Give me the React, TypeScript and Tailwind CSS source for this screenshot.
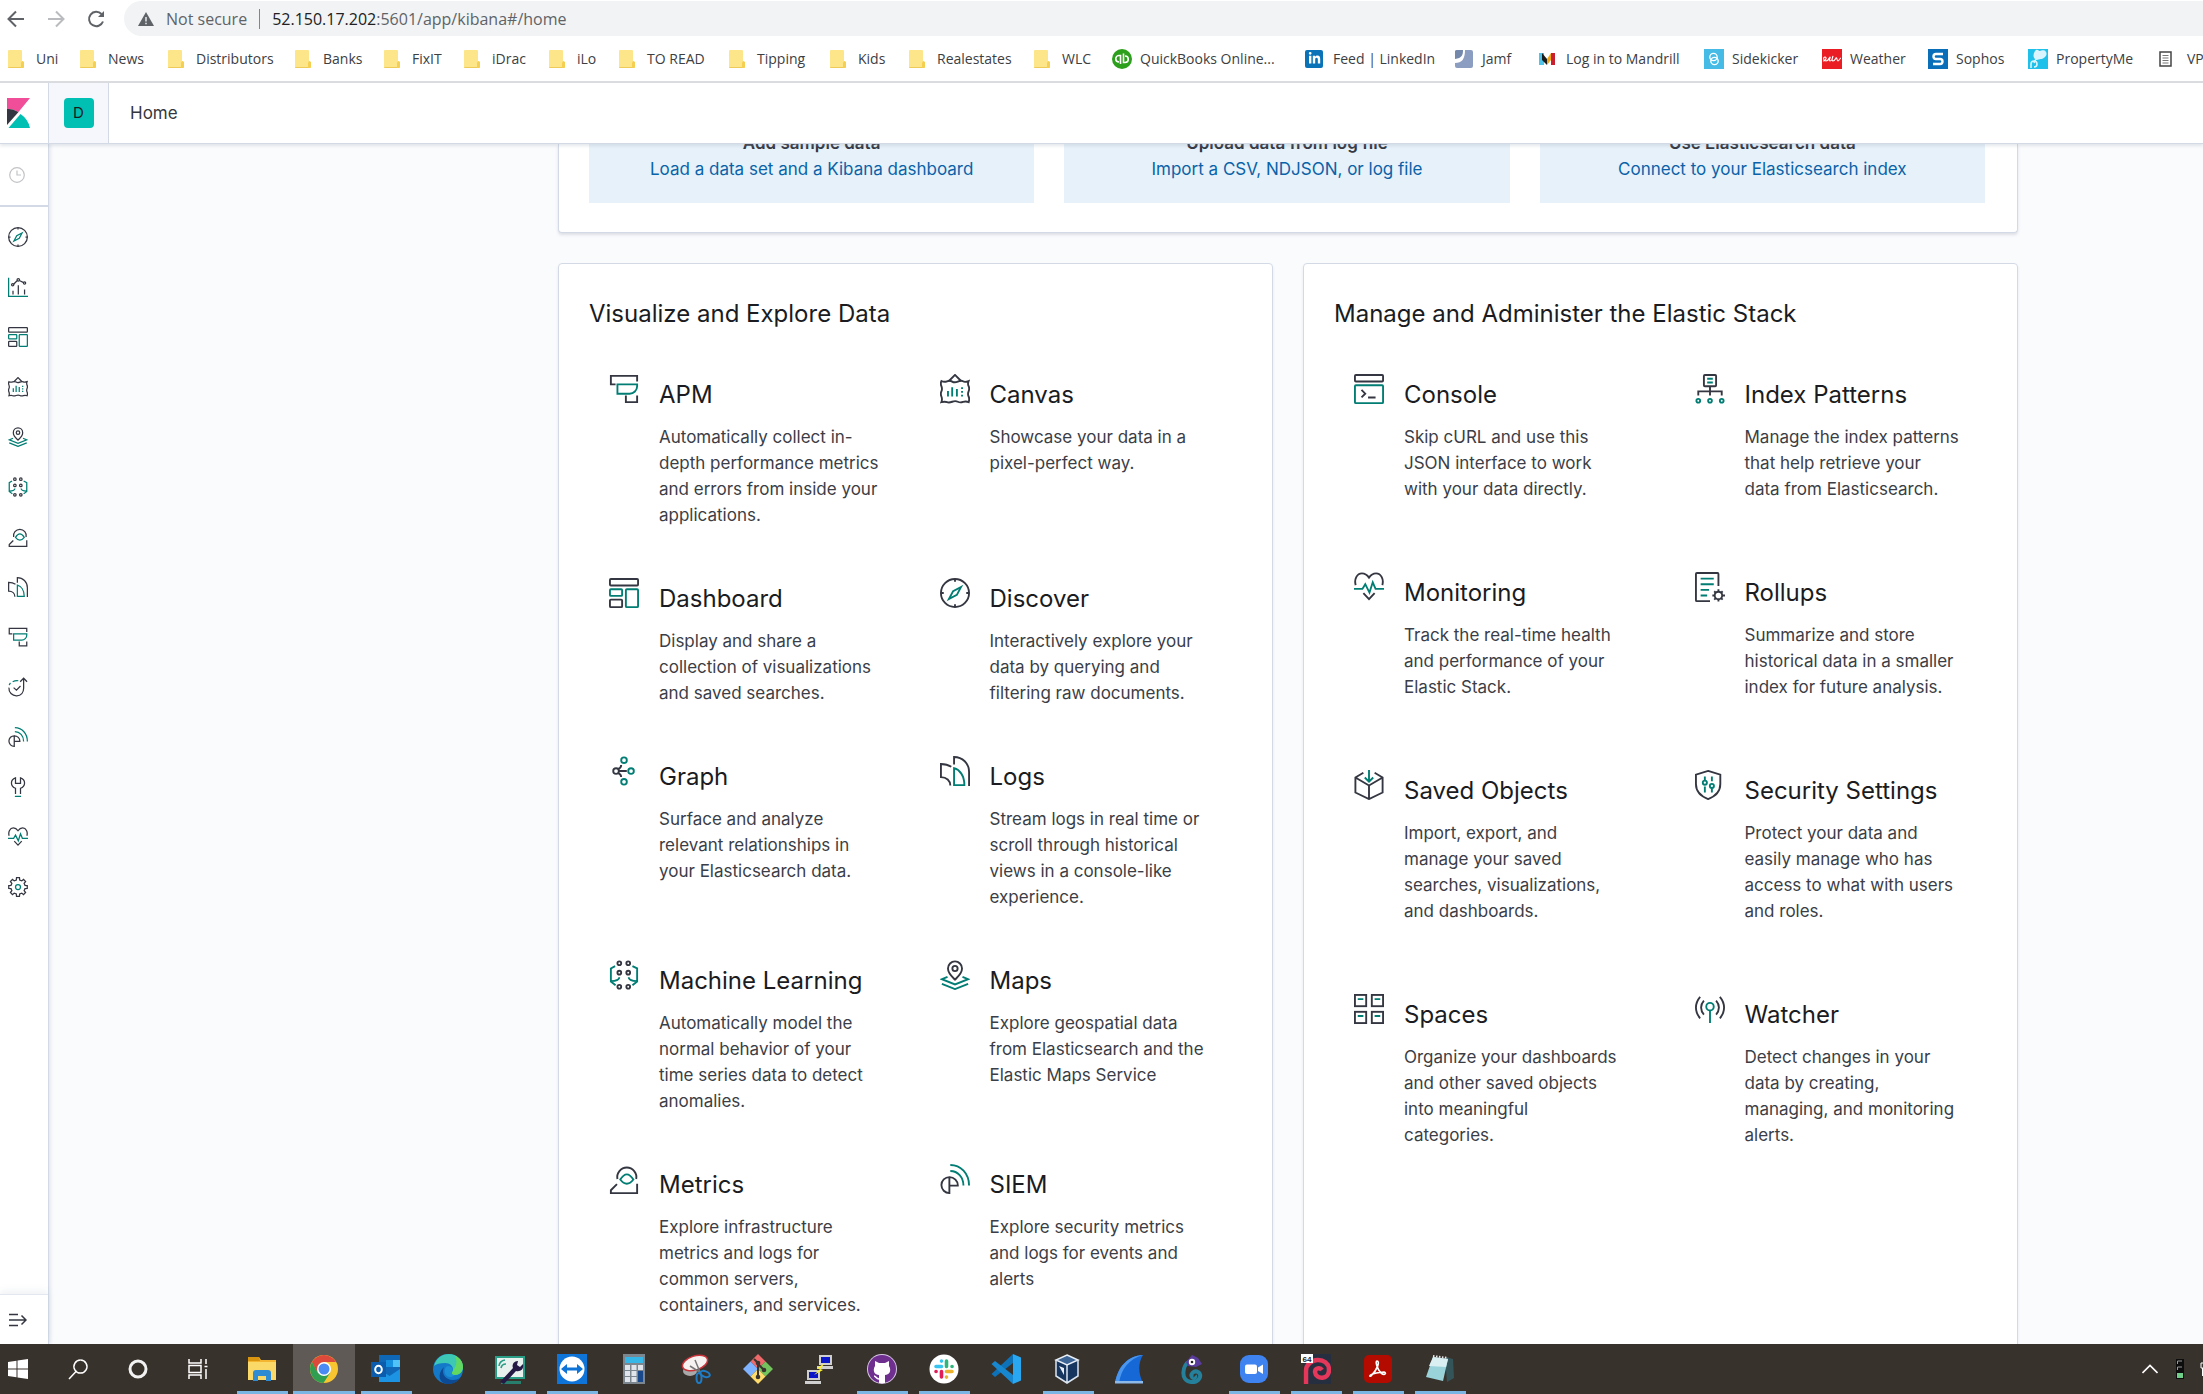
import type { ReactNode } from 'react';
import { FaLinkedinIn } from 'react-icons/fa';

const DARK = '#343741';
const TEAL = '#017D73';

function gearPath(cx: number, cy: number, outer: number, inner: number, teeth: number) {
  const points: string[] = [];
  const step = (Math.PI * 2) / teeth;
  for (let i = 0; i < teeth; i++) {
    const a = i * step;
    const corners: [number, number][] = [
      [inner, a - step * 0.3],
      [outer, a - step * 0.2],
      [outer, a + step * 0.2],
      [inner, a + step * 0.3],
    ];
    corners.forEach(([r, t]) => points.push(`${(cx + r * Math.sin(t)).toFixed(2)} ${(cy - r * Math.cos(t)).toFixed(2)}`));
  }
  return `M${points.join('L')}Z`;
}

type Shape = { dark: ReactNode; teal?: ReactNode };

const SHAPES: Record<string, Shape> = {
  apm: {
    dark: <path d="M7 11H2V2h28v6M18 23v7h12v-7" />,
    teal: <path d="M9 11h21v2a8 8 0 0 1-8 8H9z" />,
  },
  canvas: {
    dark: (
      <>
        <path d="M9.500 7.500L16 1l6.500 6.500" />
        <path d="M1.500 7.500q3 1.500 6 .3t5.500.3 6 0 5.500-.3 6-.3q-1.200 3 0 5.500t0 5.500 0 5.500.1 6q-3-1.300-6-.2t-5.600-.2-6 0-5.500.4-6 0q1.200-3 0-6t0-5.500 0-5.500 0-5.500z" />
      </>
    ),
    teal: <path d="M8.500 18v6M13 14v10M18 16v8M23.500 14v2M23.500 18v2M23.500 22v2" />,
  },
  dashboard: {
    dark: (
      <>
        <rect x="1" y="1" width="30" height="7" rx="1" />
        <rect x="1" y="23" width="13" height="8" rx="1" />
      </>
    ),
    teal: (
      <>
        <rect x="1" y="12" width="13" height="7" rx="1" />
        <rect x="18" y="12" width="13" height="19" rx="1" />
      </>
    ),
  },
  discover: {
    dark: (
      <>
        <circle cx="16" cy="16" r="15" />
        <path d="M16 1v3M16 28v3M1 16h3M28 16h3" />
      </>
    ),
    teal: <path d="M22.500 9.500l-4.500 8.500-8.500 4.500 4.500-8.500z" />,
  },
  graph: {
    dark: (
      <>
        <circle cx="7.500" cy="16" r="3" />
        <path d="M10.500 16H19M13 9.500c0 2-1 3.500-3.500 4.500M13 22.500c0-2-1-3.500-3.500-4.500" />
      </>
    ),
    teal: (
      <>
        <circle cx="16" cy="4.500" r="3" />
        <circle cx="23.500" cy="16" r="3" />
        <circle cx="16" cy="27.500" r="3" />
      </>
    ),
  },
  logs: {
    dark: <path d="M12 11.500C9 9.500 6 8.500 1 8.500v14c6 0 10 4 10 9M15 9V1c9 0 16 7 16 16v15" />,
    teal: <path d="M15 13c6 1.500 11 8 11 18H15z" />,
  },
  ml: {
    dark: (
      <>
        <circle cx="11" cy="3.500" r="2" />
        <circle cx="20.500" cy="3.500" r="2" />
        <circle cx="11" cy="13.500" r="2" />
        <circle cx="20.500" cy="13.500" r="2" />
        <circle cx="11" cy="28.500" r="2" />
        <circle cx="20.500" cy="28.500" r="2" />
      </>
    ),
    teal: <path d="M6.500 6.500L2 9v14l5 4M2 22.500c4 0 9-.5 9-4M25 6.500L30 9v14l-5 4M30 22.500c-4 0-9-.5-9-4" />,
  },
  maps: {
    dark: (
      <>
        <path d="M16 21c-4-4-7.500-7-7.500-12a7.500 7.500 0 0 1 15 0c0 5-3.500 8-7.500 12z" />
        <circle cx="16" cy="9" r="2.800" />
      </>
    ),
    teal: <path d="M8 18l-6 2.500 14 5.500 14-5.500-6-2.500M2 25.500l14 5.500 14-5.500" />,
  },
  metrics: {
    dark: <path d="M9 16a10.200 10.200 0 1 1 20 0M8.500 21.500L2 28v3h28V21" />,
    teal: <path d="M12 16.500q3.500-5.500 7-5.500t7 5.500q-3.500 4.500-7 4.500t-7-4.500z" />,
  },
  siem: {
    dark: <path d="M10 14a8.500 8.500 0 0 0 0 17zM10 14a9 8.700 0 0 1 9 9h-9" />,
    teal: <path d="M11 1c11 0 20 9 20 22M11 7.500c8 0 14 6.500 14 15.500" />,
  },
  console: {
    dark: (
      <>
        <rect x="1" y="1" width="30" height="7" rx="1" />
        <path d="M8 17l4 4-4 4M15 25h8" />
      </>
    ),
    teal: <rect x="1" y="12" width="30" height="19" rx="1" />,
  },
  indexPatterns: {
    dark: (
      <>
        <rect x="9.500" y="1" width="13" height="12" rx="1" />
        <path d="M16 13v10M3.500 23v-4.500h25V23" />
      </>
    ),
    teal: (
      <>
        <path d="M13 5h6M13 9h6" />
        <circle cx="3.500" cy="28.500" r="2" />
        <circle cx="16" cy="28.500" r="2" />
        <circle cx="28.500" cy="28.500" r="2" />
      </>
    ),
  },
  monitoring: {
    dark: <path d="M1.800 14C0 8 3 1.500 8.500 1.500c3.500 0 5.800 2 7.500 4.500 1.700-2.500 4-4.500 7.500-4.500C29 1.500 32 8 30.200 14M10 22.500l6 6.500 6-6.500" />,
    teal: <path d="M0 18h9l3-5 4.500 9L20 11l3 7h9" />,
  },
  rollups: {
    dark: (
      <>
        <path d="M16 31H2a1 1 0 0 1-1-1V2a1 1 0 0 1 1-1h22a1 1 0 0 1 1 1v13" />
        <circle cx="25" cy="25" r="4" />
        <path d="M25 18.500V21M25 29v2.500M18.500 25H21M29 25h3M20.500 20.500l1.700 1.700M27.800 27.800l1.700 1.700M29.500 20.500l-1.700 1.700M22.200 27.800l-1.700 1.700" />
      </>
    ),
    teal: <path d="M6 7h14M6 13h14M6 19h9M6 25h7" />,
  },
  saved: {
    dark: <path d="M10 3L1.500 8v16L16 31l14.500-7V8L22 3M1.500 8L16 16.500 30.500 8M16 16.500V31" />,
    teal: <path d="M16 0v12M11.500 8l4.500 4.500L20.500 8" />,
  },
  security: {
    dark: <path d="M14 1l13 4v10c0 7-5 13-13 16C6 28 1 22 1 15V5z" />,
    teal: (
      <>
        <path d="M10.500 7v4M10.500 17.500V24M18 7v5M18 19.500V24" />
        <circle cx="10.500" cy="13.500" r="2.200" />
        <circle cx="18" cy="17" r="2.200" />
      </>
    ),
  },
  spaces: {
    dark: (
      <>
        <rect x="1" y="1" width="12" height="12" />
        <rect x="19" y="1" width="12" height="12" />
        <rect x="1" y="19" width="12" height="12" />
        <rect x="19" y="19" width="12" height="12" />
      </>
    ),
    teal: <path d="M4 5.500h6M22 5.500h6M4 23.500h6M22 23.500h6" />,
  },
  watcher: {
    dark: <path d="M5.500 3c-6 7-6 16 0 23M26.500 3c6 7 6 16 0 23M9.500 7c-4 4.500-4 10.500 0 15M22.500 7c4 4.500 4 10.500 0 15" />,
    teal: (
      <>
        <circle cx="16" cy="13.500" r="4" />
        <path d="M16 17.500V31" />
      </>
    ),
  },
  visualize: {
    dark: (
      <>
        <path d="M8 22v6M16.500 13v15M26.500 20v8M9 11.500l5.500-5.500M19 6l6 3" />
        <circle cx="7.500" cy="12.500" r="1.800" />
        <circle cx="16.500" cy="4.500" r="2" />
        <circle cx="26.500" cy="9.500" r="1.800" />
      </>
    ),
    teal: <path d="M1 1v30h31" />,
  },
  uptime: {
    dark: <path d="M1.500 17a12 12 0 0 0 12.500 13c7 0 11-5 11-12V3M19.500 7.500L25 2l5.500 5.500M9 17l4.500 4 6.500-6.500" />,
    teal: <path d="M2 13c.5-1.500 1-2.500 2-3.500M7.500 7.500c3-1.500 6-2 9-1.500" />,
  },
  devtools: {
    dark: <path d="M12 27v-9c-4-1.500-6.500-4.500-6.500-8.500S8 3 12 1.500V10h8V1.500c4 1.500 6.500 4 6.500 8S24 16.500 20 18v9" />,
    teal: <path d="M11 31h10" />,
  },
  management: {
    dark: <path d={gearPath(16, 16, 15, 11.500, 8)} />,
    teal: <circle cx="16" cy="16" r="4" />,
  },
};

function AppIcon({ name, className }: { name: string; className: string }) {
  const { dark, teal } = SHAPES[name];
  return (
    <svg viewBox="0 0 32 32" className={className} fill="none" strokeWidth="2" aria-hidden="true">
      <g stroke={DARK}>{dark}</g>
      <g stroke={TEAL}>{teal}</g>
    </svg>
  );
}

/* ---------- Browser ---------- */

function Folder() {
  return (
    <svg viewBox="0 0 20 20" className="size-5">
      <path d="M0 2a1 1 0 0 1 1-1h12a1 1 0 0 1 1 1v10l2 1v5a1 1 0 0 1-1 1H1a1 1 0 0 1-1-1z" fill="#fde68a" />
      <path d="M14 12l2 1v5a1 1 0 0 1-1 1h-2v-5z" fill="#f5cf52" />
      <path d="M0 18h13v1H1a1 1 0 0 1-1-1z" fill="#eecb58" />
    </svg>
  );
}

const favicons: Record<string, ReactNode> = {
  qb: (
    <svg viewBox="0 0 20 20" className="size-5">
      <circle cx="10" cy="10" r="10" fill="#2ca01c" />
      <g fill="none" stroke="#fff" strokeWidth="1.600">
        <path d="M8.500 13.500V6.500H7a3 3 0 0 0 0 6.500M11.500 6v7.500H13a3 3 0 0 0 0-6.500M8.500 6v9M11.500 4.500V13" />
      </g>
    </svg>
  ),
  linkedin: (
    <span className="flex size-[18px] items-center justify-center rounded-xs bg-[#0a73b7] text-white">
      <FaLinkedinIn size={13} />
    </span>
  ),
  jamf: (
    <svg viewBox="0 0 20 20" className="size-5">
      <path d="M1 2a2 2 0 0 1 2-1h6c0 5-1 8-8 9z" fill="#7488ab" />
      <path d="M11 1h6a2 2 0 0 1 2 2v14a2 2 0 0 1-2 2H3a2 2 0 0 1-2-2v-3c7 0 10-4 10-13z" fill="#8b9dc0" />
    </svg>
  ),
  mandrill: (
    <svg viewBox="0 0 20 20" className="size-5">
      <path d="M1 4h5v12H1z" fill="#4fc3e8" />
      <path d="M4 4l5 6v6l-5-5z" fill="#1b1b1b" />
      <path d="M9 10l4-6v7l-4 5z" fill="#f0a818" />
      <path d="M13 4h4v12h-4z" fill="#c8202f" />
    </svg>
  ),
  sidekicker: (
    <svg viewBox="0 0 20 20" className="size-5">
      <path d="M0 0h20v20H0z" fill="#45bbe6" />
      <g fill="none" stroke="#fff" strokeWidth="1.300">
        <circle cx="9.500" cy="8" r="3.700" />
        <circle cx="10.500" cy="12" r="3.700" />
      </g>
    </svg>
  ),
  weather: (
    <svg viewBox="0 0 20 20" className="size-5">
      <path d="M0 0h20v20H0z" fill="#ea1c24" />
      <path d="M1 12c3 0 4-4 2-4s-2 4 1 4 3-4 4-4-2 4 0 4 3-5 3-5-2 5 0 5 2-2 3-3 1 3 2 3 2-3 3-3" fill="none" stroke="#fff" strokeWidth="1.100" />
    </svg>
  ),
  sophos: (
    <svg viewBox="0 0 20 20" className="size-5">
      <path d="M0 0h20v20H0z" fill="#0a6fb8" />
      <path d="M15 5H8a2.500 2.500 0 0 0 0 5h4a2.500 2.500 0 0 1 0 5H5" fill="none" stroke="#fff" strokeWidth="2.400" />
    </svg>
  ),
  property: (
    <svg viewBox="0 0 20 20" className="size-5">
      <path d="M0 0h20v20H0z" fill="#1fc0ea" />
      <path d="M7 2c2-3 4 0 5 0s4-2 6 1-2 7-5 7-4 2-6 0-2-5 0-8z" fill="#d9f4fc" />
      <path d="M3 19v-4a3 3 0 1 1 3 3M8 10l-2 4" fill="none" stroke="#d9f4fc" strokeWidth="1.600" />
    </svg>
  ),
  doc: (
    <svg viewBox="0 0 20 20" className="size-5">
      <path d="M1 3h11v14H1z" fill="#fff" stroke="#444" strokeWidth="1.500" />
      <path d="M3.500 6.500h6M3.500 9h6M3.500 11.500h6M3.500 14h6" stroke="#777" />
    </svg>
  ),
};

const bookmarks: { label: string; icon?: string; width: string }[] = [
  { label: 'Uni', width: 'w-[72px]' },
  { label: 'News', width: 'w-[88px]' },
  { label: 'Distributors', width: 'w-[127px]' },
  { label: 'Banks', width: 'w-[89px]' },
  { label: 'FixIT', width: 'w-[80px]' },
  { label: 'iDrac', width: 'w-[85px]' },
  { label: 'iLo', width: 'w-[70px]' },
  { label: 'TO READ', width: 'w-[110px]' },
  { label: 'Tipping', width: 'w-[101px]' },
  { label: 'Kids', width: 'w-[79px]' },
  { label: 'Realestates', width: 'w-[125px]' },
  { label: 'WLC', width: 'w-[78px]' },
  { label: 'QuickBooks Online...', icon: 'qb', width: 'w-[193px]' },
  { label: 'Feed | LinkedIn', icon: 'linkedin', width: 'w-[149px]' },
  { label: 'Jamf', icon: 'jamf', width: 'w-[84px]' },
  { label: 'Log in to Mandrill', icon: 'mandrill', width: 'w-[166px]' },
  { label: 'Sidekicker', icon: 'sidekicker', width: 'w-[118px]' },
  { label: 'Weather', icon: 'weather', width: 'w-[106px]' },
  { label: 'Sophos', icon: 'sophos', width: 'w-[100px]' },
  { label: 'PropertyMe', icon: 'property', width: 'w-[131px]' },
  { label: 'VP', icon: 'doc', width: 'w-[80px]' },
];

function BrowserBar() {
  return (
    <header className="shrink-0 border-b-2 border-[#dadce0] bg-white font-['Open_Sans',sans-serif] text-[#3c4043]">
      <div className="flex h-9 items-center pt-px">
        <div className="flex w-[124px] shrink-0 items-center gap-5 pl-1.5">
          <button aria-label="Back" className="text-[#5f6368]">
            <svg viewBox="0 0 20 20" className="size-5" fill="none" stroke="currentColor" strokeWidth="2">
              <path d="M18 10H3M10 2.500L2.500 10l7.500 7.500" />
            </svg>
          </button>
          <button aria-label="Forward" className="text-[#b9bbbe]">
            <svg viewBox="0 0 20 20" className="size-5" fill="none" stroke="currentColor" strokeWidth="2">
              <path d="M2 10h15M10 2.500l7.500 7.500-7.500 7.500" />
            </svg>
          </button>
          <button aria-label="Reload" className="text-[#5f6368]">
            <svg viewBox="0 0 20 20" className="size-5" fill="none" stroke="currentColor" strokeWidth="2">
              <path d="M17 12.500A7.200 7.200 0 1 1 15.500 5" />
              <path d="M18 2v6h-6z" fill="currentColor" stroke="none" />
            </svg>
          </button>
        </div>
        <button className="flex h-full min-w-0 flex-1 items-center rounded-l-full bg-[#f1f3f4] pl-3.5 text-base text-[#5f6368]">
          <svg viewBox="0 0 16 14" className="mr-3 h-3.5 w-4" fill="#5f6368">
            <path d="M8 0l8 14H0z" />
            <path d="M7.300 5h1.400v4.500H7.300zM7.300 10.800h1.400v1.400H7.300z" fill="#f1f3f4" />
          </svg>
          Not secure
          <span className="mx-3 h-5 w-px bg-[#80868b]" />
          <span>
            <span className="text-[#202124]">52.150.17.202</span>:5601/app/kibana#/home
          </span>
        </button>
      </div>
      <nav aria-label="Bookmarks" className="flex h-[45px] items-center overflow-hidden pl-2 text-sm">
        {bookmarks.map((b) => (
          <a key={b.label} href="#" className={`flex shrink-0 items-center whitespace-nowrap ${b.width}`}>
            <span className="mr-2 flex w-5 shrink-0 items-center">{b.icon ? favicons[b.icon] : <Folder />}</span>
            {b.label}
          </a>
        ))}
      </nav>
    </header>
  );
}

/* ---------- Kibana ---------- */

function TopBar() {
  return (
    <div className="relative z-10 flex h-[61px] shrink-0 border-b border-[#d3dae6] bg-white shadow-[0_2px_3px_rgba(152,162,179,0.25)]">
      <a href="#" aria-label="Kibana" className="flex w-12 items-center pl-[7px]">
        <svg viewBox="0 0 23 30" className="h-[30px] w-[23px]">
          <path d="M0 0h23L11.500 14Q6 10.800 0 10.800z" fill="#f04e98" />
          <path d="M0 10.800q6 0 11.500 3.200L0 27z" fill="#343741" />
          <path d="M1.500 30L13.500 16Q21 21 23 30z" fill="#00bfb3" />
        </svg>
      </a>
      <button className="flex w-[61px] items-center justify-center border-x border-[#d3dae6] bg-[#f5f7fc]">
        <span className="flex size-[30px] items-center justify-center rounded bg-[#00bfb3] text-[15px] text-[#1a1c21]">D</span>
      </button>
      <span className="flex items-center pt-px pl-[21px] text-[17px] text-[#343741]">Home</span>
    </div>
  );
}

const navIcons = [
  ['discover', 'Discover'],
  ['visualize', 'Visualize'],
  ['dashboard', 'Dashboard'],
  ['canvas', 'Canvas'],
  ['maps', 'Maps'],
  ['ml', 'Machine Learning'],
  ['metrics', 'Metrics'],
  ['logs', 'Logs'],
  ['apm', 'APM'],
  ['uptime', 'Uptime'],
  ['siem', 'SIEM'],
  ['devtools', 'Dev Tools'],
  ['monitoring', 'Stack Monitoring'],
  ['management', 'Management'],
];

function SideNav() {
  return (
    <nav className="z-[5] flex w-[49px] shrink-0 flex-col border-r border-[#d3dae6] bg-white shadow-[2px_0_3px_rgba(152,162,179,0.2)]">
      <button aria-label="Recently viewed" className="flex h-[63px] items-center border-b-2 border-[#d3dae6] pl-[9px]">
        <svg viewBox="0 0 16 16" className="size-4" fill="none" stroke="#c2c3c6" strokeWidth="1.200">
          <circle cx="8" cy="8" r="7.300" />
          <path d="M8 3.500V8h4" />
        </svg>
      </button>
      <div className="flex flex-1 flex-col pt-[5px]">
        {navIcons.map(([icon, label]) => (
          <a key={icon} href="#" aria-label={label} className="flex h-[50px] items-center pl-2">
            <AppIcon name={icon} className="size-5" />
          </a>
        ))}
      </div>
      <button aria-label="Expand navigation" className="flex h-[50px] items-center border-t border-[#e3e8f0] pl-[9px] shadow-[0_-4px_6px_rgba(152,162,179,0.12)]">
        <svg viewBox="0 0 18 14" className="h-3.5 w-[18px]" fill="none" stroke="#343741" strokeWidth="1.500">
          <path d="M0 1.500h9M0 7h17M0 12.500h9M12.500 2.500L17 7l-4.500 4.500" />
        </svg>
      </button>
    </nav>
  );
}

const dataCards = [
  ['Add sample data', 'Load a data set and a Kibana dashboard'],
  ['Upload data from log file', 'Import a CSV, NDJSON, or log file'],
  ['Use Elasticsearch data', 'Connect to your Elasticsearch index'],
];

const explore = [
  ['apm', 'APM', 'Automatically collect in-depth performance metrics and errors from inside your applications.'],
  ['canvas', 'Canvas', 'Showcase your data in a pixel-perfect way.'],
  ['dashboard', 'Dashboard', 'Display and share a collection of visualizations and saved searches.'],
  ['discover', 'Discover', 'Interactively explore your data by querying and filtering raw documents.'],
  ['graph', 'Graph', 'Surface and analyze relevant relationships in your Elasticsearch data.'],
  ['logs', 'Logs', 'Stream logs in real time or scroll through historical views in a console-like experience.'],
  ['ml', 'Machine Learning', 'Automatically model the normal behavior of your time series data to detect anomalies.'],
  ['maps', 'Maps', 'Explore geospatial data from Elasticsearch and the Elastic Maps Service'],
  ['metrics', 'Metrics', 'Explore infrastructure metrics and logs for common servers, containers, and services.'],
  ['siem', 'SIEM', 'Explore security metrics and logs for events and alerts'],
];

const manage = [
  ['console', 'Console', 'Skip cURL and use this JSON interface to work with your data directly.'],
  ['indexPatterns', 'Index Patterns', 'Manage the index patterns that help retrieve your data from Elasticsearch.'],
  ['monitoring', 'Monitoring', 'Track the real-time health and performance of your Elastic Stack.'],
  ['rollups', 'Rollups', 'Summarize and store historical data in a smaller index for future analysis.'],
  ['saved', 'Saved Objects', 'Import, export, and manage your saved searches, visualizations, and dashboards.'],
  ['security', 'Security Settings', 'Protect your data and easily manage who has access to what with users and roles.'],
  ['spaces', 'Spaces', 'Organize your dashboards and other saved objects into meaningful categories.'],
  ['watcher', 'Watcher', 'Detect changes in your data by creating, managing, and monitoring alerts.'],
];

function Panel({ title, items, gap }: { title: string; items: string[][]; gap: string }) {
  return (
    <section className="min-w-0 flex-1 rounded border border-[#d3dae6] bg-white p-[30px] shadow-[0_2px_3px_rgba(152,162,179,0.2)]">
      <h2 className="mb-5 text-2xl leading-10 text-[#1a1c21]">{title}</h2>
      <div className={`grid grid-cols-2 ${gap}`}>
        {items.map(([icon, name, text]) => (
          <a key={name} href="#" className="flex gap-5 pt-5 pr-7 pb-[22px] pl-5">
            <AppIcon name={icon} className="size-[30px] shrink-0" />
            <div className="min-w-0">
              <h3 className="mb-2 text-2xl leading-[42px] text-[#1a1c21]">{name}</h3>
              <p className="text-[17px] leading-[26px] text-[#3b3e46]">{text}</p>
            </div>
          </a>
        ))}
      </div>
    </section>
  );
}

function Home() {
  return (
    <main className="flex min-w-0 flex-1 flex-col gap-[30px] overflow-hidden bg-[#fafbfd] pr-[185px] pl-[509px]">
      <section className="flex h-[89px] shrink-0 flex-col justify-end rounded-b border border-t-0 border-[#d3dae6] bg-white shadow-[0_2px_3px_rgba(152,162,179,0.3)]">
        <div className="flex h-[59px] gap-[30px] overflow-hidden pr-8 pl-[30px]">
          {dataCards.map(([title, link]) => (
            <div key={title} className="flex flex-1 flex-col justify-end bg-[#e6f1fa] pb-[21px] text-center text-[17px]">
              <h3 className="leading-[26px] font-semibold text-[#343741]">{title}</h3>
              <a href="#" className="leading-[26px] text-[#0a63a8]">{link}</a>
            </div>
          ))}
        </div>
        <div className="h-[29px] shrink-0" />
      </section>
      <div className="flex flex-1 gap-[30px]">
        <Panel title="Visualize and Explore Data" items={explore} gap="gap-2" />
        <Panel title="Manage and Administer the Elastic Stack" items={manage} gap="content-start gap-7" />
      </div>
    </main>
  );
}

/* ---------- Taskbar ---------- */

const systemButtons: [string, ReactNode][] = [
  ['Search', <path d="M12.500 1a6.500 6.500 0 1 1-.1 0M8 12.500L1 20" fill="none" stroke="#fff" strokeWidth="1.500" />],
  ['Cortana', <circle cx="10" cy="10" r="8" fill="none" stroke="#f2f2f2" strokeWidth="3" />],
  ['Task view', <path d="M1 0v4h12V0M1 20v-4h12v4M1 6.500h12v7H1zM18 0v5M18 10v10M16.500 7.500h3" fill="none" stroke="#fff" strokeWidth="1.500" />],
];

const apps: { name: string; open?: boolean; active?: boolean; art: ReactNode }[] = [
  {
    name: 'File Explorer', open: true,
    art: (
      <>
        <path d="M1 3h11l2 3h15v20H1z" fill="#f4b630" />
        <path d="M1 8h28v18H1z" fill="#fbd968" />
        <path d="M1 3h11l1 4H1z" fill="#d9950f" />
        <path d="M6 27v-8a3 3 0 0 1 3-3h12a3 3 0 0 1 3 3v8h-5v-5h-8v5z" fill="#2f8bd2" />
      </>
    ),
  },
  {
    name: 'Chrome', open: true, active: true,
    art: (
      <>
        <circle cx="15" cy="15" r="14" fill="#f7c530" />
        <path d="M2.900 8A14 14 0 0 1 27.100 8H15L8.500 19z" fill="#dd4a3b" />
        <path d="M2.900 8A14 14 0 0 0 14.500 29L21.300 18.500 8.700 18.500z" fill="#2f9e51" />
        <circle cx="15" cy="15" r="7" fill="#fff" />
        <circle cx="15" cy="15" r="5.500" fill="#4a8af4" />
      </>
    ),
  },
  {
    name: 'Outlook', open: true,
    art: (
      <>
        <path d="M8 1h21v27H8z" fill="#0f67b8" />
        <path d="M15 6h7v7h-7z" fill="#1490df" />
        <path d="M22 6h7v7h-7z" fill="#4fc3f7" />
        <path d="M8 28V15l10.500 7L29 15v13z" fill="#1c93e3" />
        <path d="M0 8h15v15H0z" fill="#0b5cad" />
        <ellipse cx="7.500" cy="15.500" rx="3.300" ry="3.800" fill="none" stroke="#fff" strokeWidth="2" />
      </>
    ),
  },
  {
    name: 'Edge',
    art: (
      <>
        <circle cx="15" cy="15" r="15" fill="#1579c9" />
        <path d="M1 12C3 4 9 0 16 0c8 0 14 6 14 13 0 5-4 8-8 8-3 0-4-1-3-3 3-4-1-9-7-9-5 0-9 1-11 3z" fill="#3cc8b4" />
        <path d="M22 2c5 2 8 6 8 11 0 5-4 8-8 8-3 0-4-1-3-3 4-5 6-10 3-16z" fill="#62d860" />
        <path d="M11 13c-3 6 1 13 9 13 3 0 5-1 7-2-3 4-7 6-12 6C7 30 3 21 11 13z" fill="#0c4a94" />
        <path d="M15 12c4 0 6 4 4 6-1 2 0 3 3 3-3 3-9 3-10-2-1-3 0-6 3-7z" fill="#1c8fd6" />
      </>
    ),
  },
  {
    name: 'Remote Tool', open: true,
    art: (
      <>
        <path d="M1 3h28v21H1z" fill="#e9f1ee" stroke="#2a9d86" strokeWidth="2" />
        <path d="M6 27h20v3H6z" fill="#277e6d" />
        <path d="M4 12a7 7 0 0 1 6-6M6 14a5 5 0 0 1 5-4" fill="none" stroke="#2a9d86" strokeWidth="1.600" />
        <path d="M5 28l13-14a5 5 0 0 1 5-7l-1 4 3 2 3-3c1 5-2 8-7 7L9 30z" fill="#241a45" />
      </>
    ),
  },
  {
    name: 'TeamViewer', open: true,
    art: (
      <>
        <path d="M0 0h30v30H0z" fill="#0e74d8" />
        <circle cx="15" cy="15" r="12.500" fill="#fff" />
        <path d="M4 15l6-5v3.500h10V10l6 5-6 5v-3.500H10V20z" fill="#0e74d8" />
      </>
    ),
  },
  {
    name: 'Calculator',
    art: (
      <>
        <path d="M4 0h22v30H4z" fill="#7b868f" />
        <path d="M6 3h18v6H6z" fill="#35b7e8" />
        <path d="M6 11h5v5H6zM12.500 11h5v5h-5zM19 11h5v5h-5zM6 17h5v5H6zM12.500 17h5v5h-5zM6 23h5v5H6zM12.500 23h5v5h-5z" fill="#dfe5ea" />
        <path d="M19 17h5v11h-5z" fill="#19498a" />
      </>
    ),
  },
  {
    name: 'Snipping Tool',
    art: (
      <>
        <ellipse cx="9" cy="17" rx="7" ry="5" fill="#a9a9a9" />
        <ellipse cx="14" cy="9" rx="13" ry="7" transform="rotate(-18 14 9)" fill="#f7f2f2" stroke="#c9343b" strokeWidth="1.500" />
        <path d="M14 6l5 12M9 12l11 7" stroke="#777" strokeWidth="1.500" />
        <ellipse cx="18" cy="24" rx="2.500" ry="5" fill="none" stroke="#1f7cc4" strokeWidth="2" />
        <ellipse cx="24" cy="20" rx="5" ry="2.800" fill="none" stroke="#1f7cc4" strokeWidth="2" transform="rotate(20 24 20)" />
      </>
    ),
  },
  {
    name: 'Git Bash',
    art: (
      <>
        <path d="M15 0l7.500 7.500L15 15 7.500 7.500z" fill="#ee6a6a" />
        <path d="M7.500 7.500L15 15l-7.500 7.500L0 15z" fill="#80b3ff" />
        <path d="M22.500 7.500L30 15l-7.500 7.500L15 15z" fill="#73c45c" />
        <path d="M15 15l7.500 7.500L15 30l-7.500-7.500z" fill="#ffdb6b" />
        <path d="M11 5l4 4v15M15 10l6 6" fill="none" stroke="#3b342e" strokeWidth="2" />
        <circle cx="15" cy="9" r="2.300" fill="#3b342e" />
        <circle cx="15" cy="23" r="2.300" fill="#3b342e" />
        <circle cx="21" cy="16" r="2.300" fill="#3b342e" />
      </>
    ),
  },
  {
    name: 'PuTTY',
    art: (
      <>
        <path d="M14 1h13v10H14zM12 12h16v3H12zM2 16h13v10H2zM0 27h16v3H0z" fill="#cfcfcf" />
        <path d="M16 3h9v6h-9zM4 18h9v6H4z" fill="#0a16c8" />
        <path d="M20 9l-8 5 3 1-6 6 9-5-3-1z" fill="#fdf32c" />
      </>
    ),
  },
  {
    name: 'GitHub Desktop', open: true,
    art: (
      <>
        <circle cx="15" cy="15" r="15" fill="#d9c8e6" />
        <circle cx="15" cy="15" r="14" fill="#6e2f8f" />
        <path d="M8 7l4 2h6l4-2v5c3 5 0 9-4 9v8h-6v-8c-4 0-7-4-4-9z" fill="#fff" />
        <path d="M12 25c-3 0-3-3-5-3" fill="none" stroke="#fff" strokeWidth="1.600" />
      </>
    ),
  },
  {
    name: 'Slack', open: true,
    art: (
      <>
        <circle cx="15" cy="15" r="14.500" fill="#fff" />
        <g strokeWidth="3.600" strokeLinecap="round" fill="none">
          <path d="M12.500 7v.1M7 12.500h5.500" stroke="#36c5f0" />
          <path d="M17.500 7v5.500M23 12.500h.1" stroke="#2eb67d" />
          <path d="M23 17.500h-5.500M17.500 23v.1" stroke="#ecb22e" />
          <path d="M12.500 23v-5.500M7 17.500h.1" stroke="#e01e5a" />
        </g>
      </>
    ),
  },
  {
    name: 'Visual Studio Code',
    art: (
      <>
        <path d="M22 0l8 3.500v23L22 30z" fill="#2aa7f1" />
        <path d="M22 0v9L4 23l-3.500-3z" fill="#0d72b8" />
        <path d="M22 30v-9L4 7 .500 10z" fill="#1788d0" />
      </>
    ),
  },
  {
    name: 'VirtualBox', open: true,
    art: (
      <>
        <path d="M14 1l11 5v16l-11 7L3 22V6z" fill="#16355f" />
        <path d="M14 1l11 5-11 5L3 6z" fill="#3c6596" stroke="#e8eef5" strokeWidth="1.500" />
        <path d="M3 6v16l11 7 11-7V6M14 11v18" fill="none" stroke="#dbe5f0" strokeWidth="1.500" />
        <path d="M6 12l5 2v7z" fill="#e8eef5" />
      </>
    ),
  },
  {
    name: 'Wireshark',
    art: (
      <>
        <path d="M0 29C3 13 12 2 28 1c-5 8-5 18 0 28z" fill="#1668d6" />
        <path d="M0 29C3 13 12 2 28 1 14 5 6 15 4 29z" fill="#4a96ee" />
        <path d="M0 27h28v2.500H0z" fill="#8db9e8" />
      </>
    ),
  },
  {
    name: 'Chameleon',
    art: (
      <>
        <path d="M13 7C5 11 3 27 14 28c8 1 12-7 7-10-4-2-8 2-6 5 2 2 4 0 3-1" fill="none" stroke="#25809b" strokeWidth="4" />
        <path d="M9 8l6-7 6 3 4 6-6 3-8-1z" fill="#5a3c9c" />
        <circle cx="15" cy="8" r="3.200" fill="#fff" />
        <circle cx="15" cy="8" r="1.300" fill="#222" />
      </>
    ),
  },
  {
    name: 'Zoom', open: true,
    art: (
      <>
        <rect x="1" y="1" width="28" height="28" rx="9" fill="#3f83f1" />
        <rect x="6" y="10.500" width="12" height="9.500" rx="2" fill="#fff" />
        <path d="M19 13.500l5-3v9.500l-5-3z" fill="#fff" />
      </>
    ),
  },
  {
    name: 'Debian', open: true,
    art: (
      <>
        <path d="M2 0h28v30H2z" fill="#252f3f" />
        <path d="M5 30V17C5 3 28 2 28 16c0 10-13 10-14 2 0-4 5-5 7-2" fill="none" stroke="#e5375a" strokeWidth="4.500" />
        <path d="M0 0h12v9H0z" fill="#fff" />
        <text x="6" y="7.500" textAnchor="middle" fontSize="8" fontWeight="700" fontFamily="Liberation Sans" fill="#222">64</text>
      </>
    ),
  },
  {
    name: 'Acrobat', open: true,
    art: (
      <>
        <rect x="1" y="1" width="28" height="28" rx="5" fill="#b30b00" />
        <path d="M14 7c3 0 1 8-6 15-3 1-1-3 13-4 3 1 1 4-3 1-4-4-6-12-4-12z" fill="none" stroke="#fff" strokeWidth="1.600" />
      </>
    ),
  },
  {
    name: 'Notepad', open: true,
    art: (
      <>
        <path d="M20 3l8 2 1 19-7 4z" fill="#33555a" />
        <path d="M8 3l15 2-5 22L1 23z" fill="#9ad2da" />
        <path d="M8 3l15 2-2 8L4 12z" fill="#d9eff2" />
        <path d="M8 2l15 2" stroke="#e8e8e8" strokeWidth="2" strokeDasharray="1.500 1.500" />
      </>
    ),
  },
];

function Taskbar() {
  return (
    <footer className="z-20 flex h-[50px] shrink-0 bg-[#38322d]">
      <button aria-label="Start" className="flex w-12 shrink-0 items-center pl-2">
        <svg viewBox="0 0 20 20" className="size-5" fill="#fff">
          <path d="M0 3l8.500-1.300v7.800H0zM9.500 1.500L20 0v9.500H9.500zM0 10.500h8.500v7.800L0 17zM9.500 10.500H20V20L9.500 18.500z" />
        </svg>
      </button>
      {systemButtons.map(([name, art]) => (
        <button key={name} aria-label={name} className="flex w-[60px] shrink-0 items-center justify-center">
          <svg viewBox="0 0 20 20" className="size-5 overflow-visible">{art}</svg>
        </button>
      ))}
      <div className="ml-[3px] flex">
        {apps.map((app) => (
          <button
            key={app.name}
            aria-label={app.name}
            className={`flex w-[62px] shrink-0 flex-col items-center justify-between pt-2.5 ${app.active ? 'bg-[#5f5a56]' : ''}`}
          >
            <svg viewBox="0 0 30 30" className="size-[30px]">{app.art}</svg>
            {app.open && <span className={`h-[3px] bg-[#7ab5e3] ${app.active ? 'w-full' : 'w-[51px]'}`} />}
          </button>
        ))}
      </div>
      <div className="ml-auto flex shrink-0 items-center">
        <button aria-label="Show hidden icons" className="mr-[18px]">
          <svg viewBox="0 0 16 10" className="h-2.5 w-4" fill="none" stroke="#fff" strokeWidth="1.600">
            <path d="M.500 9L8 1.500 15.500 9" />
          </svg>
        </button>
        <svg viewBox="0 0 8 20" className="mr-4 h-5 w-2">
          <path d="M0 0h8v20H0z" fill="#0d0d0d" />
          <path d="M1.500 5V2H6M1.500 11V8H6" fill="none" stroke="#9a9a9a" />
          <path d="M1 14h6v5H1z" fill="#6fce87" />
        </svg>
        <svg viewBox="0 0 3 14" className="h-3.5 w-[3px]" fill="none" stroke="#fff">
          <path d="M3 1H1v5h2M2.500 6v8" />
        </svg>
      </div>
    </footer>
  );
}

export default function App() {
  return (
    <div className="flex h-screen flex-col overflow-hidden bg-white font-['Inter',sans-serif]">
      <BrowserBar />
      <TopBar />
      <div className="flex min-h-0 flex-1">
        <SideNav />
        <Home />
      </div>
      <Taskbar />
    </div>
  );
}
